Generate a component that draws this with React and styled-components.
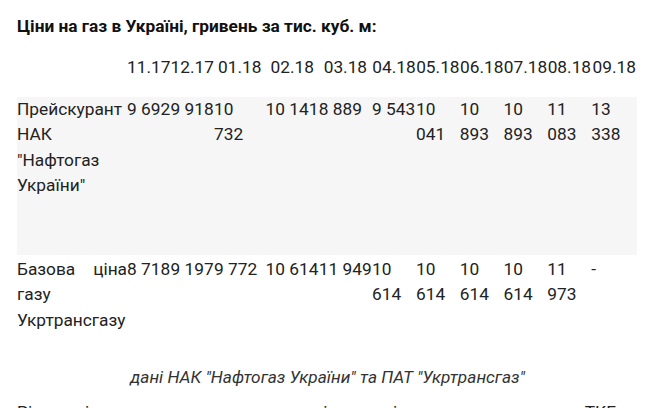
import React from 'react';
import styled, { createGlobalStyle } from 'styled-components';

const GlobalStyle = createGlobalStyle`
  body {
    margin: 0;
    background: #ffffff;
  }
`;

const Page = styled.div`
  padding: 14px 12px 0 17px;
  font-family: Roboto, 'Noto Sans', sans-serif;
  font-size: 17.3px;
  line-height: 25.5px;
  color: #222222;
  height: 408px;
  overflow: hidden;
  box-sizing: border-box;
`;

const Title = styled.p`
  margin: 0;
  font-weight: 700;
  color: #111111;
`;

const Table = styled.table`
  margin-top: 15px;
  width: 620px;
  table-layout: fixed;
  border-collapse: collapse;
`;

const Col = styled.col`
  width: ${props => props.w}px;
`;

const HeadRow = styled.tr`
  height: 42px;
`;

const HeadCell = styled.th`
  padding: 0;
  font-weight: 400;
  text-align: center;
  vertical-align: top;
  white-space: nowrap;
`;

const Row = styled.tr`
  height: ${props => props.h}px;
  background: ${props => props.shaded ? '#f6f6f6' : 'transparent'};
`;

const Cell = styled.td`
  padding: ${props => props.pt || 0}px 0 0 0;
  text-align: justify;
  vertical-align: top;
`;

const Caption = styled.p`
  margin: 30px 0 0;
  font-style: italic;
  text-align: center;
  color: #333333;
`;

const Text = styled.p`
  margin: 10px 0 0;
`;

const widths = [110, 43.5, 43.5, 51.6, 53.2, 53.2, 44, 43.8, 43.8, 43.8, 44, 45.6];

const months = ['11.17', '12.17', '01.18', '02.18', '03.18', '04.18', '05.18', '06.18', '07.18', '08.18', '09.18'];

const rows = [
    {
        label: 'Прейскурант НАК "Нафтогаз України"',
        values: ['9 692', '9 918', '10 732', '10 141', '8 889', '9 543', '10 041', '10 893', '10 893', '11 083', '13 338'],
        shaded: true,
        height: 158,
    },
    {
        label: 'Базова ціна газу Укртрансгазу',
        values: ['8 718', '9 197', '9 772', '10 614', '11 949', '10 614', '10 614', '10 614', '10 614', '11 973', '-'],
        shaded: false,
        height: 80,
        pt: 2,
    },
];

function App() {
    return (
        <>
            <GlobalStyle/>
            <Page>
                <Title>Ціни на газ в Україні, гривень за тис. куб. м:</Title>
                <Table>
                    <colgroup>
                        {widths.map((w, i) => <Col key={i} w={w}/>)}
                    </colgroup>
                    <thead>
                        <HeadRow>
                            <HeadCell/>
                            {months.map(m => <HeadCell key={m}>{m}</HeadCell>)}
                        </HeadRow>
                    </thead>
                    <tbody>
                        {rows.map(row => (
                            <Row key={row.label} shaded={row.shaded} h={row.height}>
                                <Cell pt={row.pt}>{row.label}</Cell>
                                {row.values.map((v, i) => <Cell key={i} pt={row.pt}>{v}</Cell>)}
                            </Row>
                        ))}
                    </tbody>
                </Table>
                <Caption>дані НАК "Нафтогаз України" та ПАТ "Укртрансгаз"</Caption>
                <Text>Рівень ціни на газ для населення та пільговиків визначає уряд, а для ТКЕ — НКРЕКП.</Text>
            </Page>
        </>
    );
}

export default App;
